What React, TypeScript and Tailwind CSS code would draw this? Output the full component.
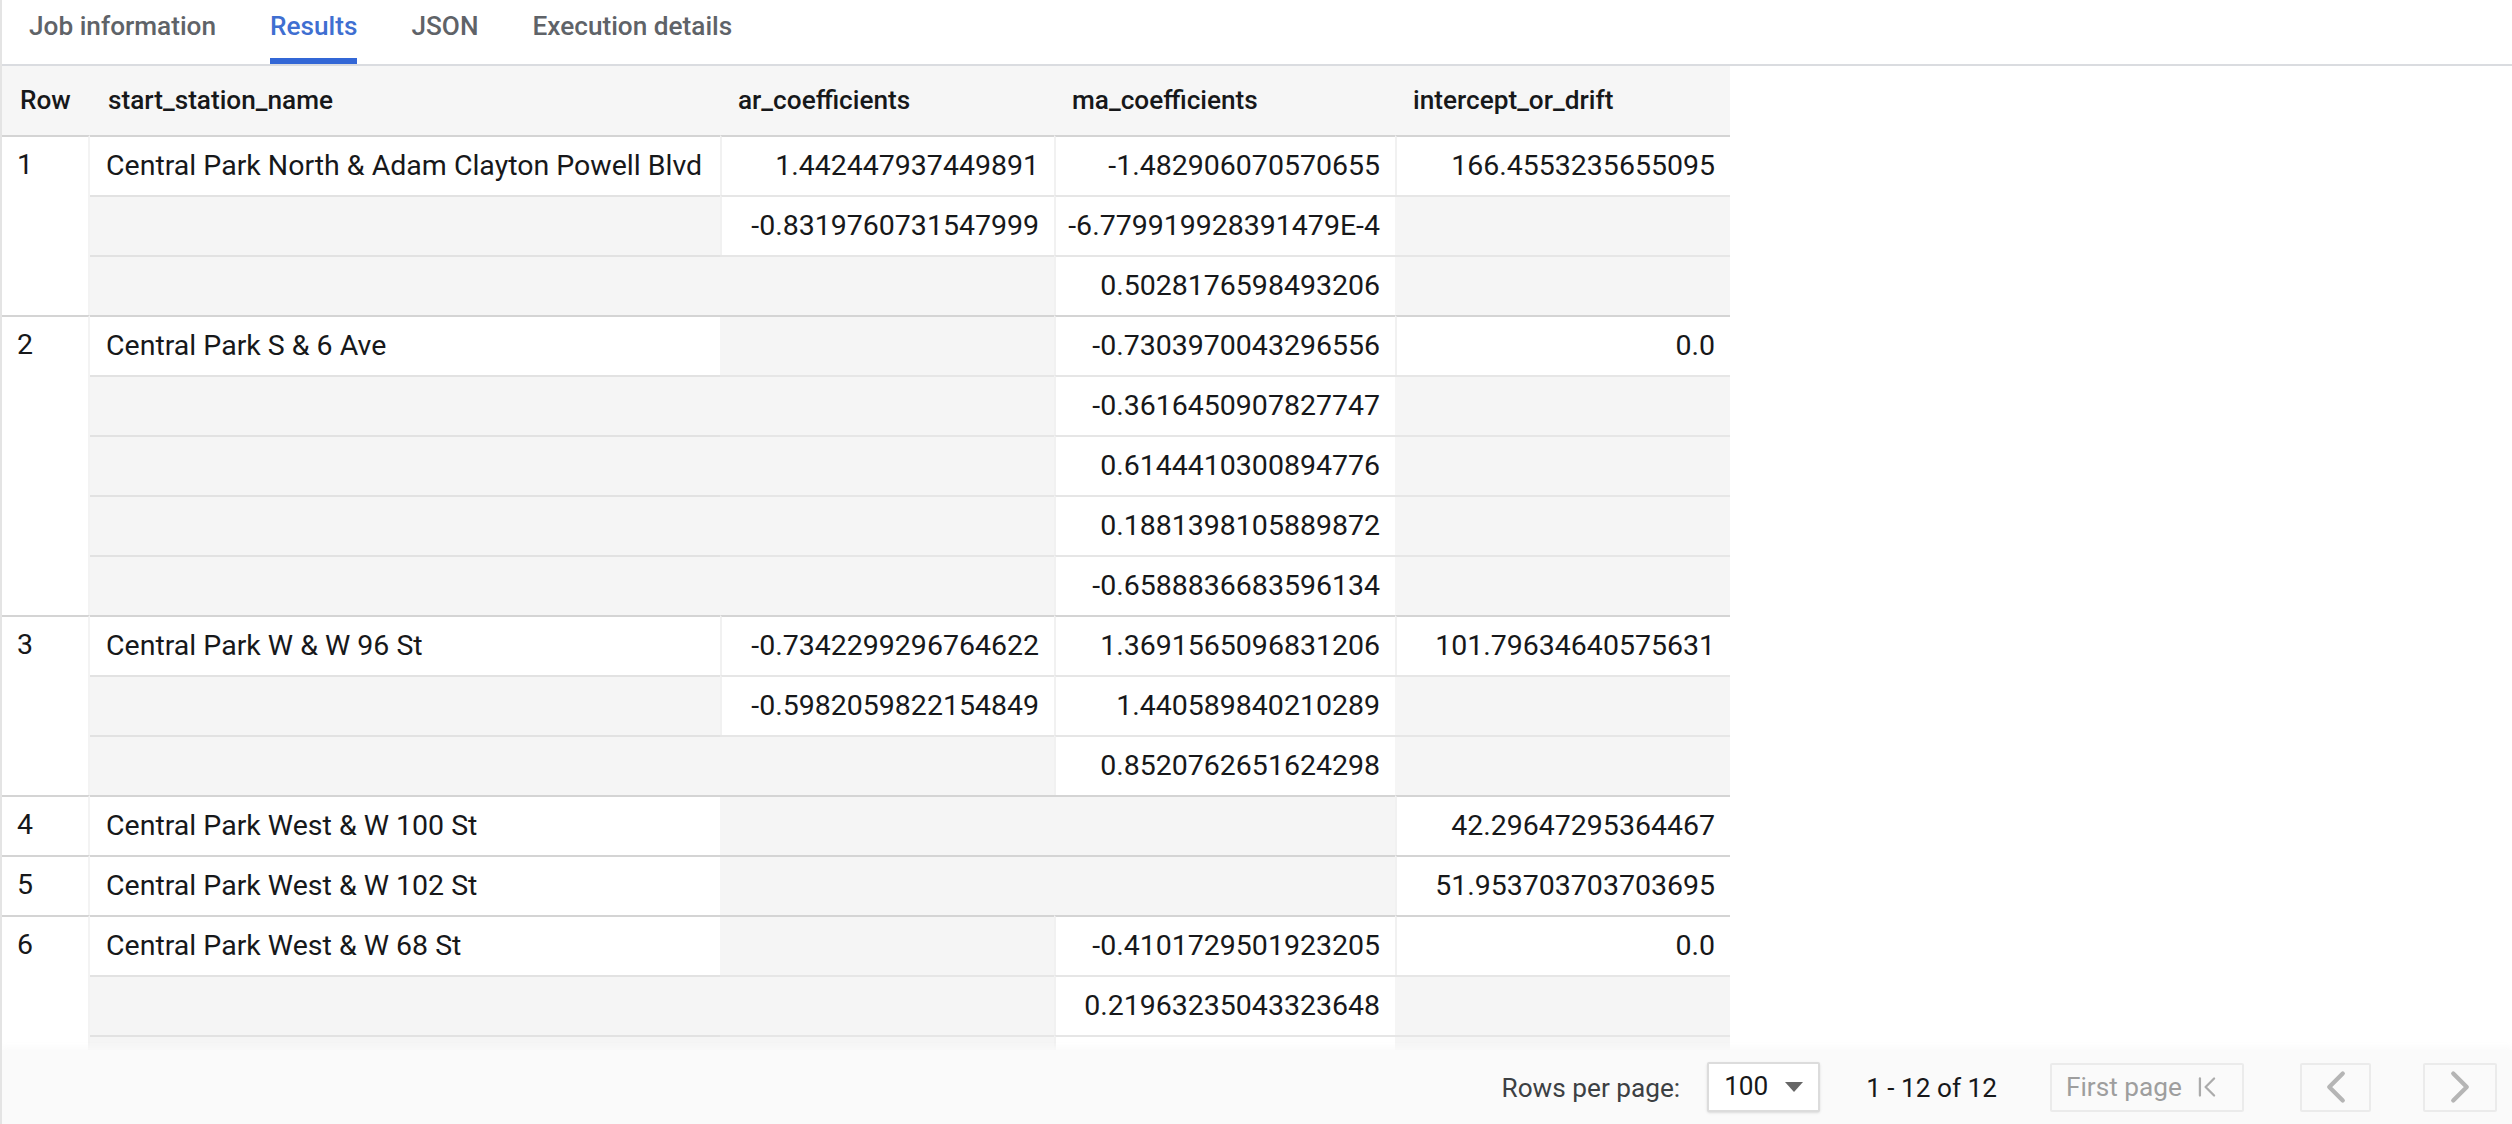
import { ChevronFirst, ChevronLeft, ChevronRight } from "lucide-react";

type Group = {
  n: number;
  station: string;
  rows: (string | null)[][];
};

const groups: Group[] = [
  {
    n: 1,
    station: "Central Park North & Adam Clayton Powell Blvd",
    rows: [
      ["1.442447937449891", "-1.482906070570655", "166.4553235655095"],
      ["-0.8319760731547999", "-6.779919928391479E-4", null],
      [null, "0.5028176598493206", null],
    ],
  },
  {
    n: 2,
    station: "Central Park S & 6 Ave",
    rows: [
      [null, "-0.7303970043296556", "0.0"],
      [null, "-0.3616450907827747", null],
      [null, "0.6144410300894776", null],
      [null, "0.1881398105889872", null],
      [null, "-0.6588836683596134", null],
    ],
  },
  {
    n: 3,
    station: "Central Park W & W 96 St",
    rows: [
      ["-0.7342299296764622", "1.3691565096831206", "101.79634640575631"],
      ["-0.5982059822154849", "1.440589840210289", null],
      [null, "0.8520762651624298", null],
    ],
  },
  { n: 4, station: "Central Park West & W 100 St", rows: [[null, null, "42.29647295364467"]] },
  { n: 5, station: "Central Park West & W 102 St", rows: [[null, null, "51.953703703703695"]] },
  {
    n: 6,
    station: "Central Park West & W 68 St",
    rows: [
      [null, "-0.4101729501923205", "0.0"],
      [null, "0.21963235043323648", null],
      [null, " ", null],
    ],
  },
];

const tabs = ["Job information", "Results", "JSON", "Execution details"];
const headers = ["Row", "start_station_name", "ar_coefficients", "ma_coefficients", "intercept_or_drift"];

function ValueCell({ value, strong }: { value: string | null; strong: boolean }) {
  const border = strong ? "border-[#d4d4d4]" : "border-[#e6e6e6]";
  if (value === null) {
    return <td className={`h-[60px] border-t-2 bg-[#f5f5f5] ${border}`} />;
  }
  return (
    <td className={`h-[60px] border-t-2 border-l-2 border-l-[#f1f1f1] bg-white pr-[15px] text-right ${border}`}>
      {value}
    </td>
  );
}

export default function App() {
  return (
    <div
      className="flex h-[1124px] w-[2512px] flex-col overflow-hidden border-l-2 border-[#e4e4e4] bg-white text-[28.5px] text-[#17181a]"
      style={{ fontFamily: "Roboto, sans-serif" }}
    >
      {/* Tabs */}
      <div className="flex h-[66px] flex-none gap-[54px] border-b-2 border-[#dadce0] pl-[27px]">
        {tabs.map((tab) => (
          <div
            key={tab}
            className={`h-[64px] pt-[10px] text-[26.2px] leading-[32px] font-medium ${
              tab === "Results" ? "border-b-[6px] border-[#3367d6] text-[#3f6fd1]" : "text-[#5f6368]"
            }`}
          >
            {tab}
          </div>
        ))}
      </div>

      {/* Results table */}
      <div className="min-h-0 flex-1 overflow-hidden">
        <table className="w-[1728px] table-fixed border-separate border-spacing-0">
          <colgroup>
            <col className="w-[88px]" />
            <col className="w-[630px]" />
            <col className="w-[334px]" />
            <col className="w-[341px]" />
            <col className="w-[335px]" />
          </colgroup>
          <thead>
            <tr>
              {headers.map((h) => (
                <th key={h} className="h-[69px] bg-[#f6f6f6] pl-[18px] text-left text-[26.2px] font-medium text-[#17181a]">
                  {h}
                </th>
              ))}
            </tr>
          </thead>
          <tbody>
            {groups.map((g) =>
              g.rows.map((row, i) => (
                <tr key={`${g.n}-${i}`}>
                  {i === 0 && (
                    <td
                      rowSpan={g.rows.length}
                      className="border-t-2 border-r-2 border-t-[#d4d4d4] border-r-[#f3f3f3] bg-white pt-[10px] pl-[15px] align-top leading-[36px]"
                    >
                      {g.n}
                    </td>
                  )}
                  {i === 0 ? (
                    <td className="h-[60px] border-t-2 border-[#d4d4d4] bg-white pl-[16px]">{g.station}</td>
                  ) : (
                    <td className="h-[60px] border-t-2 border-[#e2e2e2] bg-[#f5f5f5]" />
                  )}
                  {row.map((value, j) => (
                    <ValueCell key={j} value={value} strong={i === 0} />
                  ))}
                </tr>
              ))
            )}
          </tbody>
        </table>
      </div>

      {/* Pagination */}
      <div className="relative flex h-[74px] flex-none items-center justify-end bg-[#fafafa] pr-[15px] text-[26.2px] shadow-[0_-4px_5px_rgba(250,250,250,0.75)]">
        <span className="pt-[3px] text-[#3c4043]">Rows per page:</span>
        <div className="ml-[27px] flex h-[50px] w-[113px] items-center rounded-[2px] border-2 border-[#dcdcdc] bg-white pl-[15px] shadow-sm">
          <span className="text-[#17181a]">100</span>
          <svg viewBox="0 0 18 10" className="ml-[17px] h-[10px] w-[18px]">
            <path d="M0 0h18L9 10z" fill="#666" />
          </svg>
        </div>
        <span className="ml-[46px] pt-[3px] text-[#17181a]">1 - 12 of 12</span>
        <button className="ml-[53px] flex h-[49px] w-[194px] items-center rounded-[2px] border-2 border-[#ebebeb] pl-[14px] text-[#9e9e9e]">
          <span className="pt-[1px]">First page</span>
          <ChevronFirst className="ml-[8px] h-[34px] w-[34px] stroke-[1.6]" color="#ababab" />
        </button>
        <button className="ml-[56px] flex h-[49px] w-[71px] items-center justify-center rounded-[2px] border-2 border-[#ebebeb]">
          <ChevronLeft className="h-[54px] w-[54px] stroke-[1.9]" color="#b5b5b5" />
        </button>
        <button className="ml-[52px] flex h-[49px] w-[74px] items-center justify-center rounded-[2px] border-2 border-[#ebebeb]">
          <ChevronRight className="h-[54px] w-[54px] stroke-[1.9]" color="#b5b5b5" />
        </button>
      </div>
    </div>
  );
}
